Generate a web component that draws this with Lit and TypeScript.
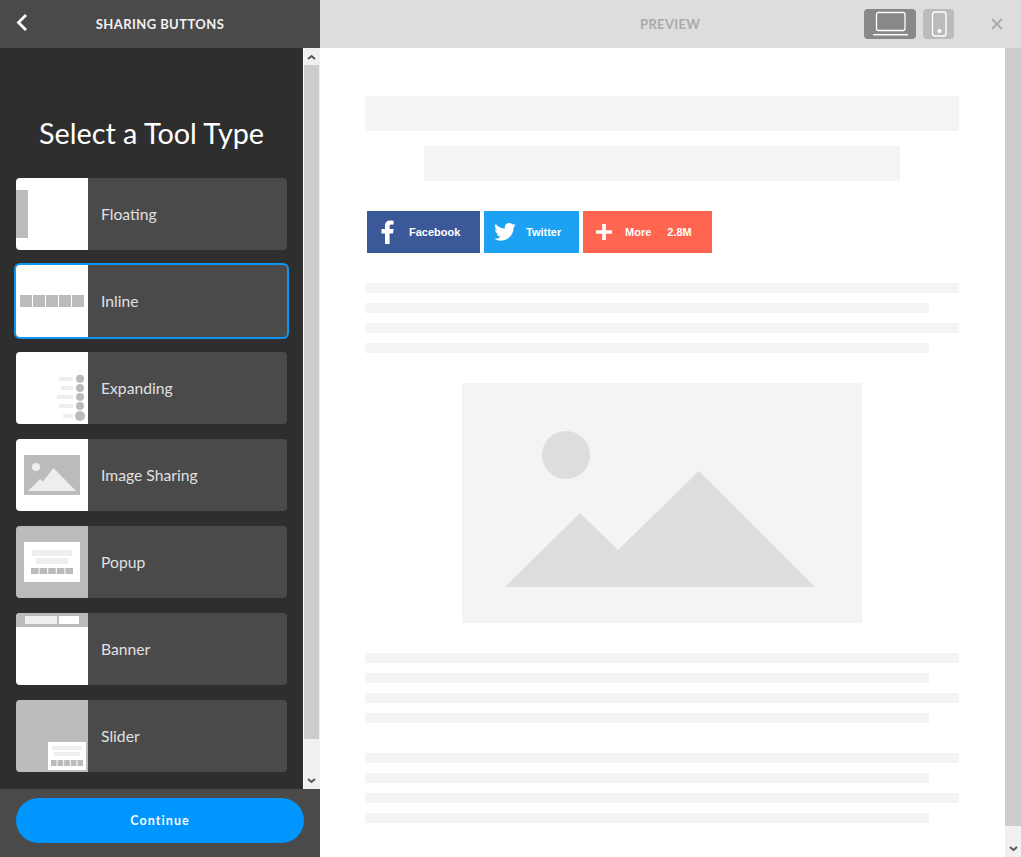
import { LitElement, html, css, svg } from "lit";
import { customElement } from "lit/decorators.js";

const squares = (x: number, y: number, w: number, h: number, gap: number) =>
  [0, 1, 2, 3, 4].map(
    (i) => svg`<rect x=${x + i * (w + gap)} y=${y} width=${w} height=${h} fill="#bbb"/>`
  );

const thumbs: Record<string, unknown> = {
  Floating: svg`<rect width="72" height="72" fill="#fff"/><rect x="0" y="12" width="12" height="48" fill="#bbb"/>`,
  Inline: svg`<rect width="72" height="72" fill="#fff"/>${squares(4, 30, 12, 12, 1)}`,
  Expanding: svg`<rect width="72" height="72" fill="#fff"/>
    <rect x="43" y="25" width="14" height="4" fill="#eee"/><circle cx="64" cy="26.7" r="4" fill="#bbb"/>
    <rect x="45" y="34" width="12" height="4" fill="#eee"/><circle cx="64" cy="36" r="4" fill="#bbb"/>
    <rect x="41" y="43" width="16" height="4" fill="#eee"/><circle cx="64" cy="45" r="4" fill="#bbb"/>
    <rect x="43" y="52" width="14" height="4" fill="#eee"/><circle cx="64" cy="54" r="4" fill="#bbb"/>
    <rect x="47" y="62" width="10" height="4" fill="#eee"/><circle cx="64" cy="64" r="5" fill="#bbb"/>`,
  "Image Sharing": svg`<rect width="72" height="72" fill="#fff"/><rect x="8" y="16" width="56" height="40" fill="#bbb"/>
    <circle cx="20" cy="28" r="4" fill="#eee"/>
    <polygon points="12,52 24,40 27,42.5 37.5,29 60,52" fill="#eee"/>`,
  Popup: svg`<rect width="72" height="72" fill="#bbb"/><rect x="8" y="16" width="56" height="40" fill="#fff"/>
    <rect x="16" y="24" width="40" height="6" fill="#eee"/><rect x="20" y="32" width="32" height="6" fill="#eee"/>
    ${squares(15, 42, 7.6, 6, 1)}`,
  Banner: svg`<rect width="72" height="72" fill="#fff"/><rect width="72" height="14" fill="#bbb"/>
    <rect x="9" y="3" width="32" height="8" fill="#eee"/><rect x="43" y="3" width="20" height="8" fill="#fff"/>`,
  Slider: svg`<rect width="72" height="72" fill="#bbb"/><rect x="32" y="42" width="38" height="28" fill="#fff"/>
    <rect x="36" y="46" width="30" height="4" fill="#eee"/><rect x="38" y="52" width="26" height="4" fill="#eee"/>
    ${squares(35, 60, 5.6, 6, 1)}`,
};

@customElement("app-root")
export class AppRoot extends LitElement {
  static styles = css`
    :host {
      display: grid;
      grid-template-columns: 320px 1fr;
      height: 100vh;
      overflow: hidden;
      font-family: "Lato", "Noto Sans", sans-serif;
      background: #fff;
    }
    .side {
      display: flex;
      flex-direction: column;
      background: #2e2e2e;
      min-height: 0;
    }
    .side-head {
      height: 48px;
      flex: none;
      background: #4a4a4a;
      display: grid;
      grid-template-columns: 48px 1fr 48px;
      align-items: center;
      color: #f2f2f2;
    }
    .back { display: block; margin-left: 14px; margin-top: -3px; }
    .side-title {
      text-align: center;
      font-size: 13px;
      letter-spacing: 0.42px;
      font-weight: 700;
      padding-bottom: 1px;
    }
    .side-body {
      flex: 1;
      min-height: 0;
      display: grid;
      grid-template-columns: 303px 17px;
    }
    .list {
      padding: 66px 16px 0;
      display: flex;
      flex-direction: column;
      overflow: hidden;
    }
    h1 {
      margin: 0 0 26px;
      font-size: 28.8px;
      line-height: 38px;
      font-weight: 400;
      color: #fff;
      text-align: center;
      width: 271px;
    }
    .cards { display: flex; flex-direction: column; gap: 15px; width: 271px; }
    .card {
      height: 72px;
      display: flex;
      background: #4a4a4a;
      border-radius: 4px;
      overflow: hidden;
      align-items: center;
      color: #e0e0e0;
      font-size: 15.7px;
    }
    .card span { padding-bottom: 1px; }
    .card.sel { box-shadow: 0 0 0 2px #0d96f2; }
    .card svg { display: block; flex: none; margin-right: 13px; }
    .scroll {
      background: #f0f0f0;
      display: flex;
      flex-direction: column;
      align-items: stretch;
    }
    .side .scroll {
      border-left: 1px solid #fff;
      border-right: 1px solid #f0f0f0;
      box-sizing: border-box;
    }
    .scroll .arrow { height: 17px; flex: none; display: flex; align-items: center; justify-content: center; }
    .scroll .thumb { background: #cdcdcd; }
    .scroll .rest { flex: 1; }
    .side-foot {
      height: 68px;
      flex: none;
      background: #4a4a4a;
      padding: 9px 16px 14px;
      box-sizing: border-box;
    }
    .continue {
      height: 45px;
      border-radius: 23px;
      background: #0096ff;
      color: #fff;
      font-size: 12.5px;
      font-weight: 700;
      letter-spacing: 1.1px;
      display: flex;
      align-items: center;
      justify-content: center;
      padding-bottom: 1px;
      box-sizing: border-box;
    }
    .main { display: flex; flex-direction: column; min-width: 0; min-height: 0; }
    .main-head {
      height: 48px;
      flex: none;
      background: #ddd;
      display: flex;
      align-items: center;
      position: relative;
    }
    .preview-label {
      position: absolute;
      left: 320px;
      width: 60px;
      text-align: center;
      font-size: 13px;
      font-weight: 700;
      letter-spacing: 0.35px;
      color: #aaa;
    }
    .devices { margin-left: 544px; display: flex; gap: 7px; }
    .dev { height: 30px; border-radius: 4px; display: flex; align-items: center; justify-content: center; }
    .dev.laptop { width: 52px; background: #888; }
    .dev.phone { width: 31px; background: #bbb; }
    .close { margin-left: 37px; display: block; }
    .main-body { flex: 1; min-height: 0; display: grid; grid-template-columns: 685px 16px; }
    .page {
      padding: 48px 46px 0 45px;
      overflow: hidden;
      display: flex;
      flex-direction: column;
      align-items: center;
    }
    .hero { background: #f4f4f4; height: 35px; flex: none; }
    .hero.a { width: 594px; margin-bottom: 15px; }
    .hero.b { width: 476px; margin-bottom: 30px; }
    .shares { width: 594px; display: flex; gap: 4px; padding-left: 2px; box-sizing: border-box; margin-bottom: 30px; }
    .share {
      height: 42px;
      display: flex;
      align-items: center;
      color: #fff;
      font: bold 11px "Liberation Sans", Arial, sans-serif;
      box-sizing: border-box;
    }
    .share svg { display: block; flex: none; }
    .fb { width: 113px; background: #3b5998; }
    .tw { width: 95px; background: #1da1f2; }
    .mo { width: 129px; background: #ff6550; }
    .fb svg { margin: 0 14px 0 14px; }
    .tw svg { margin: 0 10px 0 10px; }
    .mo svg { margin: 0 13px 0 13px; }
    .mo .n { margin-left: 16px; }
    .lines { width: 594px; display: flex; flex-direction: column; gap: 10px; margin-bottom: 30px; }
    .l { height: 10px; background: #f4f4f4; width: 564px; }
    .l.w { width: 594px; }
    .img { display: block; flex: none; margin-bottom: 30px; }
  `;

  private arrow(up: boolean) {
    return html`<div class="arrow">
      <svg width="9" height="6" viewBox="0 0 9 6">
        <path d=${up ? "M1 5 L4.5 2 L8 5" : "M1 1 L4.5 4 L8 1"} fill="none" stroke="#555" stroke-width="2"/>
      </svg>
    </div>`;
  }

  private lines() {
    return html`<div class="lines">
      <div class="l w"></div><div class="l"></div><div class="l w"></div><div class="l"></div>
    </div>`;
  }

  render() {
    return html`
      <aside class="side">
        <header class="side-head">
          <svg class="back" width="14" height="20" viewBox="0 0 14 20">
            <path d="M12 2 L4.5 9.5 L12 17" fill="none" stroke="#fff" stroke-width="2.8"/>
          </svg>
          <div class="side-title">SHARING BUTTONS</div>
          <span></span>
        </header>
        <div class="side-body">
          <div class="list">
            <h1>Select a Tool Type</h1>
            <div class="cards">
              ${Object.keys(thumbs).map(
                (name) => html`<div class="card ${name === "Inline" ? "sel" : ""}">
                  <svg width="72" height="72" viewBox="0 0 72 72">${thumbs[name]}</svg>
                  <span>${name}</span>
                </div>`
              )}
            </div>
          </div>
          <div class="scroll">
            ${this.arrow(true)}
            <div class="thumb" style="height:674px"></div>
            <div class="rest"></div>
            ${this.arrow(false)}
          </div>
        </div>
        <footer class="side-foot"><div class="continue">Continue</div></footer>
      </aside>
      <main class="main">
        <header class="main-head">
          <div class="preview-label">PREVIEW</div>
          <div class="devices">
            <div class="dev laptop">
              <svg width="36" height="26" viewBox="0 0 36 26">
                <rect x="4.5" y="1.5" width="28.5" height="18" rx="2" fill="none" stroke="#fff" stroke-width="1.3"/>
                <rect x="1" y="23" width="35" height="1.4" fill="#fff"/>
              </svg>
            </div>
            <div class="dev phone">
              <svg width="16" height="26" viewBox="0 0 16 26">
                <rect x="1.5" y="1" width="13.5" height="24" rx="2.5" fill="none" stroke="#fff" stroke-width="1.4"/>
                <circle cx="8.5" cy="20" r="2" fill="#fff"/>
              </svg>
            </div>
          </div>
          <svg class="close" width="12" height="12" viewBox="0 0 12 12">
            <path d="M1 1 L11 11 M11 1 L1 11" stroke="#aaa" stroke-width="1.8"/>
          </svg>
        </header>
        <div class="main-body">
          <div class="page">
            <div class="hero a"></div>
            <div class="hero b"></div>
            <div class="shares">
              <div class="share fb">
                <svg width="14" height="24" viewBox="0 0 14 24">
                  <path d="M4 24 V13.5 H0.5 V9 H4 V6 C4 2.2 6.2 0.5 9.3 0.5 C10.8 0.5 12 0.6 12.6 0.7 V4.6 H10.4 C8.8 4.6 8.6 5.5 8.6 6.6 V9 H12.6 L12 13.5 H8.6 V24 Z" fill="#fff"/>
                </svg>
                <span>Facebook</span>
              </div>
              <div class="share tw">
                <svg width="22" height="18" viewBox="0 0 24 20">
                  <path d="M24 2.4 a9.8 9.8 0 0 1-2.8.8 a4.9 4.9 0 0 0 2.2-2.7 a9.8 9.8 0 0 1-3.1 1.2 a4.9 4.9 0 0 0-8.4 4.5 A14 14 0 0 1 1.7 1 a4.9 4.9 0 0 0 1.5 6.6 a4.9 4.9 0 0 1-2.2-.6 a4.9 4.9 0 0 0 3.9 4.9 a4.9 4.9 0 0 1-2.2.1 a4.9 4.9 0 0 0 4.6 3.4 A9.9 9.9 0 0 1 0 17.4 A14 14 0 0 0 7.5 19.6 c9 0 14-7.5 14-14 l0-.6 A10 10 0 0 0 24 2.4 Z" fill="#fff"/>
                </svg>
                <span>Twitter</span>
              </div>
              <div class="share mo">
                <svg width="16" height="16" viewBox="0 0 16 16">
                  <path d="M6.2 0 H9.8 V6.2 H16 V9.8 H9.8 V16 H6.2 V9.8 H0 V6.2 H6.2 Z" fill="#fff"/>
                </svg>
                <span>More</span><span class="n">2.8M</span>
              </div>
            </div>
            ${this.lines()}
            <svg class="img" width="400" height="240" viewBox="0 0 400 240">
              <rect width="400" height="240" fill="#f4f4f4"/>
              <circle cx="104" cy="72" r="24" fill="#ddd"/>
              <polygon points="43,204 118,130 156,167 237,88 353,204" fill="#ddd"/>
            </svg>
            ${this.lines()}
            ${this.lines()}
          </div>
          <div class="scroll">
            <div class="thumb" style="height:778px"></div>
            <div class="rest"></div>
            ${this.arrow(false)}
          </div>
        </div>
      </main>
    `;
  }
}
